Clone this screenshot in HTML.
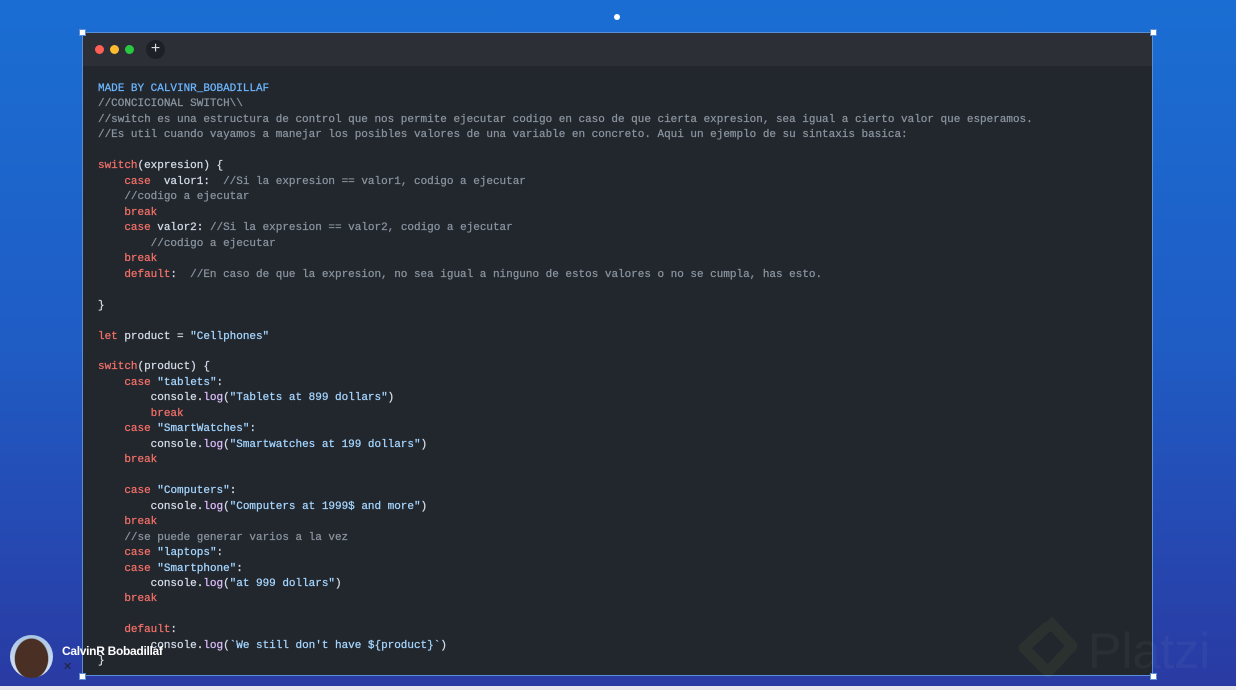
<!DOCTYPE html>
<html><head><style>
body{margin:0;width:1236px;height:690px;overflow:hidden;background:linear-gradient(180deg,#1a6ed3 0%,#1f5cc4 50%,#2a3aa3 100%);position:relative;font-family:"Liberation Sans",sans-serif}
.strip{position:absolute;left:0;top:686px;width:1236px;height:4px;background:#e6e8ee}
.win{position:absolute;left:82px;top:32px;width:1071px;height:644px;background:#22262d;border:1px solid #5a8fd8;box-sizing:border-box;overflow:hidden}
.bar{height:33px;background:#2c2f36;position:relative}
.dot{position:absolute;top:12px;width:9px;height:9px;border-radius:50%}
.plus{position:absolute;left:63px;top:7px;width:19px;height:19px;border-radius:50%;background:#1d2026;color:#ddd;font-size:16px;line-height:18px;text-align:center}
pre{margin:0;position:absolute;left:15px;top:49px;font-family:"Liberation Mono",monospace;font-size:10.98px;line-height:15.47px;color:#d4dde8;-webkit-text-stroke:0.25px currentColor}
.c{color:#8a949f}.k{color:#f47067}.s{color:#a5d6ff}.f{color:#dcbdfb}.m{color:#6cb6ff}
.h{position:absolute;width:5px;height:5px;background:#fff;border:1px solid #5a8fd8}
</style></head><body>
<div class="strip"></div>
<div class="win">
<div class="bar"><div class="dot" style="left:12px;background:#ff5f57"></div><div class="dot" style="left:27px;background:#febc2e"></div><div class="dot" style="left:42px;background:#28c840"></div><div class="plus">+</div></div>
<pre><span class="m">MADE BY CALVINR_BOBADILLAF</span>
<span class="c">//CONCICIONAL SWITCH\\
//switch es una estructura de control que nos permite ejecutar codigo en caso de que cierta expresion, sea igual a cierto valor que esperamos.
//Es util cuando vayamos a manejar los posibles valores de una variable en concreto. Aqui un ejemplo de su sintaxis basica:</span>

<span class="k">switch</span>(expresion) {
    <span class="k">case</span>  valor1:  <span class="c">//Si la expresion == valor1, codigo a ejecutar</span>
    <span class="c">//codigo a ejecutar</span>
    <span class="k">break</span>
    <span class="k">case</span> valor2: <span class="c">//Si la expresion == valor2, codigo a ejecutar</span>
        <span class="c">//codigo a ejecutar</span>
    <span class="k">break</span>
    <span class="k">default</span>:  <span class="c">//En caso de que la expresion, no sea igual a ninguno de estos valores o no se cumpla, has esto.</span>

}

<span class="k">let</span> product = <span class="s">"Cellphones"</span>

<span class="k">switch</span>(product) {
    <span class="k">case</span> <span class="s">"tablets"</span>:
        console.<span class="f">log</span>(<span class="s">"Tablets at 899 dollars"</span>)
        <span class="k">break</span>
    <span class="k">case</span> <span class="s">"SmartWatches"</span>:
        console.<span class="f">log</span>(<span class="s">"Smartwatches at 199 dollars"</span>)
    <span class="k">break</span>

    <span class="k">case</span> <span class="s">"Computers"</span>:
        console.<span class="f">log</span>(<span class="s">"Computers at 1999$ and more"</span>)
    <span class="k">break</span>
    <span class="c">//se puede generar varios a la vez</span>
    <span class="k">case</span> <span class="s">"laptops"</span>:
    <span class="k">case</span> <span class="s">"Smartphone"</span>:
        console.<span class="f">log</span>(<span class="s">"at 999 dollars"</span>)
    <span class="k">break</span>

    <span class="k">default</span>:
        console.<span class="f">log</span>(<span class="s">`We still don't have ${product}`</span>)
}</pre>
</div>
<svg style="position:absolute;left:1012px;top:610px;opacity:.07" width="224" height="76"><path d="M36 10 L60 36 L36 62 L12 38 L36 16" fill="none" stroke="#8fbf50" stroke-width="11" stroke-linejoin="round"/><text x="76" y="58" font-family="Liberation Sans" font-size="50" fill="#9aa4b8">Platzi</text></svg>
<div class="h" style="left:79px;top:29px"></div><div class="h" style="left:1150px;top:29px"></div><div class="h" style="left:79px;top:673px"></div><div class="h" style="left:1150px;top:673px"></div>
<div style="position:absolute;left:614px;top:14px;width:6px;height:6px;border-radius:50%;background:#fff"></div>
<div style="position:absolute;left:10px;top:635px;width:43px;height:43px;border-radius:50%;background:radial-gradient(ellipse 40% 48% at 50% 55%,#4a3024 0 95%,transparent 100%),linear-gradient(#a9c4e4,#dce8f5)"></div>
<div style="position:absolute;left:62px;top:644px;color:#fff;font-size:12px;font-weight:bold;letter-spacing:-0.3px">CalvinR Bobadillaf</div>
<div style="position:absolute;left:63px;top:660px;color:#223;font-size:11px">✕</div>
</body></html>
